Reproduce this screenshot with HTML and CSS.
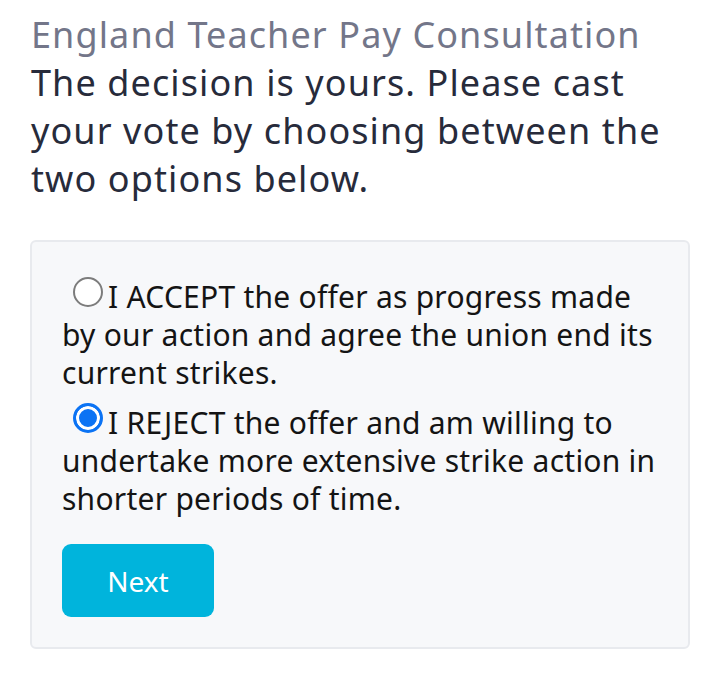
FILE: index.html
```html
<!DOCTYPE html>
<html lang="en">
<head>
  <meta charset="UTF-8" />
  <meta name="viewport" content="width=device-width, initial-scale=1.0"/>
  <title>England Teacher Pay Consultation</title>
  <link rel="stylesheet" href="styles.css">
</head>
<body>
  <div class="page">
    <h1 class="title">England Teacher Pay Consultation</h1>
    <p class="intro">The decision is yours. Please cast your vote by choosing between the two options below.</p>

    <form class="ballot">
      <label class="option">
        <input type="radio" name="vote" value="accept">I ACCEPT the offer as progress made by our action and agree the union end its current strikes.
      </label>
      <label class="option">
        <input type="radio" name="vote" value="reject" checked>I REJECT the offer and am willing to undertake more extensive strike action in shorter periods of time.
      </label>
      <button type="button" class="next">Next</button>
    </form>
  </div>
</body>
</html>
```

FILE: styles.css
```css
body {
  margin: 0;
  padding: 0;
  background: #fff;
  font-family: "Noto Sans", "Open Sans", sans-serif;
}

.page {
  padding: 11px 30px 0 31px;
}

.title {
  margin: 0;
  font-size: 36px;
  font-weight: 400;
  line-height: 48px;
  letter-spacing: 1.1px;
  color: #737689;
}

.intro {
  margin: 0 0 37px;
  font-size: 36px;
  line-height: 48px;
  letter-spacing: 1.1px;
  color: #272b3b;
}

.ballot {
  background: #f7f8fa;
  border: 2px solid #e8eaee;
  border-radius: 6px;
  padding: 35px 30px 30px 30px;
  margin-left: -1px;
}

.option {
  display: block;
  font-size: 30px;
  line-height: 38px;
  letter-spacing: 0.25px;
  color: #141414;
  margin-bottom: 11px;
}

.option input {
  appearance: none;
  -webkit-appearance: none;
  box-sizing: border-box;
  width: 30px;
  height: 30px;
  margin: 0 5px 0 11px;
  border: 2px solid #7c7c7c;
  border-radius: 50%;
  background: #fff;
  vertical-align: 1px;
}

.option input:checked {
  border: 3px solid #0b73f4;
  background: #0b73f4;
  box-shadow: inset 0 0 0 3px #fff;
}

.next {
  margin-top: 15px;
  width: 152px;
  height: 73px;
  border: none;
  border-radius: 9px;
  background: #00b4dc;
  color: #fff;
  font-family: "Noto Sans", sans-serif;
  font-size: 28px;
  cursor: pointer;
}
```
